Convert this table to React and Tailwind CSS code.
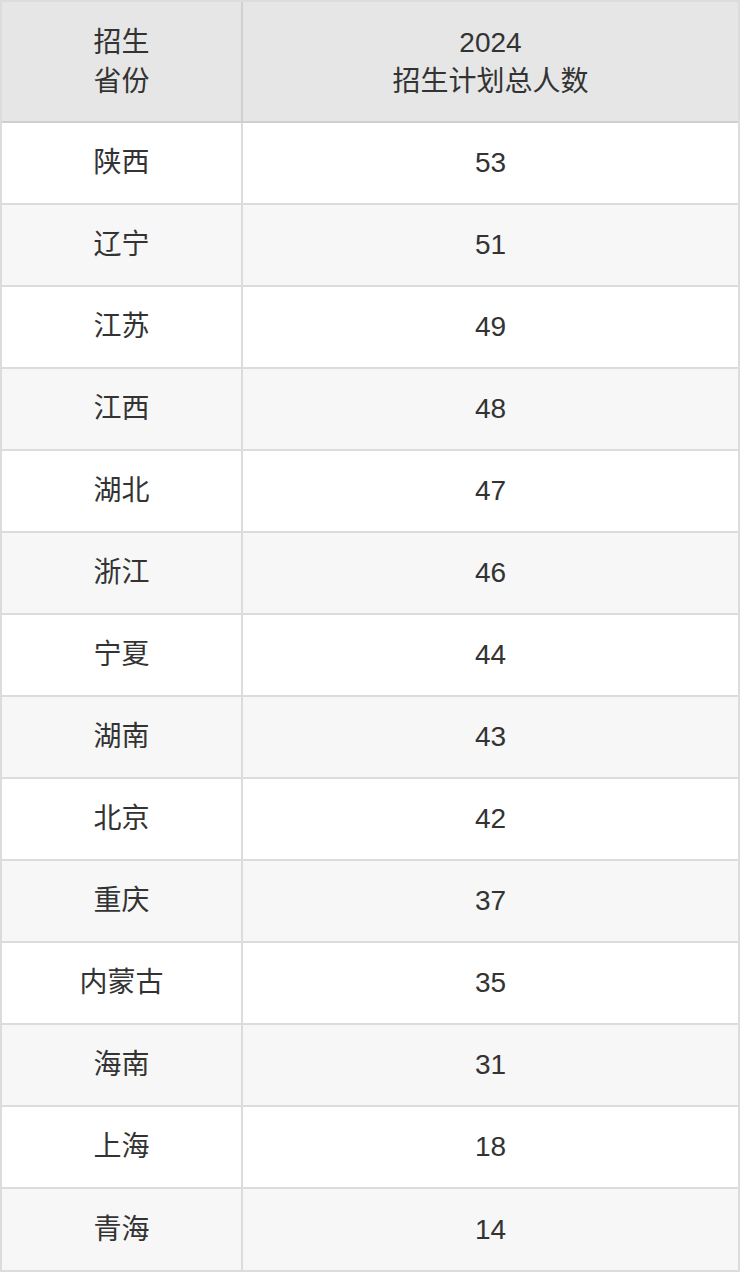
import React from 'react';

const rows = [
  ['陕西', 53],
  ['辽宁', 51],
  ['江苏', 49],
  ['江西', 48],
  ['湖北', 47],
  ['浙江', 46],
  ['宁夏', 44],
  ['湖南', 43],
  ['北京', 42],
  ['重庆', 37],
  ['内蒙古', 35],
  ['海南', 31],
  ['上海', 18],
  ['青海', 14],
];

const font = { fontFamily: '"Liberation Sans", Arial, "Noto Sans CJK SC", sans-serif' };

export default function App() {
  return (
    <div className="w-[740px] bg-white text-[#333] text-[28px]" style={font}>
      <div className="border-2 border-[#dcdcdc]">
        {/* header */}
        <div className="grid grid-cols-[239px_2px_495px] bg-[#e6e6e6] h-[121px] border-b-2 border-[#cfcfcf]">
          <div className="flex flex-col items-center justify-center leading-[39px]">
            <span>招生</span>
            <span>省份</span>
          </div>
          <div className="bg-[#d0d0d0]" />
          <div className="flex flex-col items-center justify-center leading-[39px]">
            <span>2024</span>
            <span>招生计划总人数</span>
          </div>
        </div>
        {rows.map(([name, num], i) => (
          <div
            key={name}
            className={`grid grid-cols-[239px_2px_495px] ${i < rows.length - 1 ? 'h-[82px] border-b-2 border-[#dcdcdc]' : 'h-[81px]'} ${i % 2 === 1 ? 'bg-[#f7f7f7]' : 'bg-white'}`}
          >
            <div className="flex items-center justify-center">{name}</div>
            <div className="bg-[#dcdcdc]" />
            <div className="flex items-center justify-center">{num}</div>
          </div>
        ))}
      </div>
    </div>
  );
}
